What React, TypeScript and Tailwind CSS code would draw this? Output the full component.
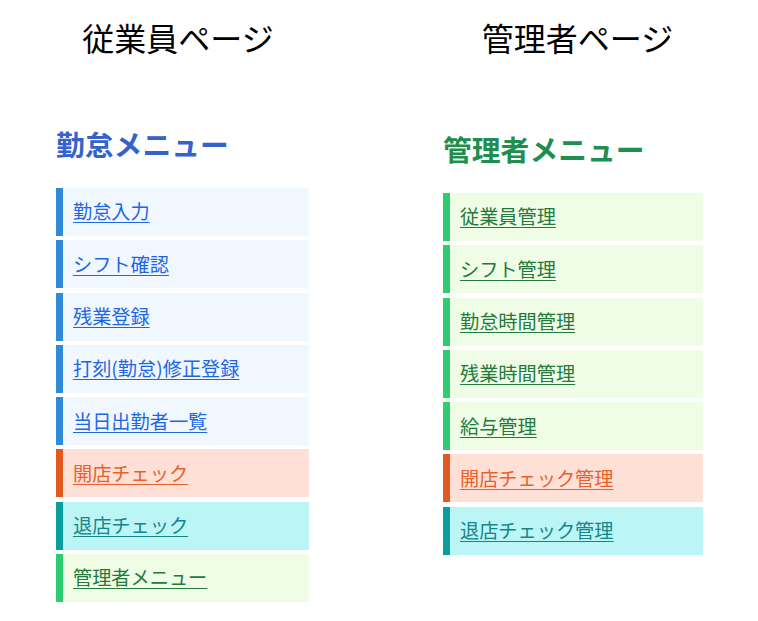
import React from 'react';

type Tone = 'blue' | 'orange' | 'teal' | 'green';

interface MenuItem {
  label: string;
  tone: Tone;
}

const toneStyles: Record<Tone, string> = {
  blue: 'bg-[#f0f7ff] border-[#2f8ad8] text-[#1f66e5]',
  orange: 'bg-[#ffe0d6] border-[#e35a1e] text-[#e8602a]',
  teal: 'bg-[#bcf5f5] border-[#0b9e9e] text-[#14868a]',
  green: 'bg-[#effde6] border-[#2ecc71] text-[#237a3b]',
};

const employeeMenu: MenuItem[] = [
  { label: '勤怠入力', tone: 'blue' },
  { label: 'シフト確認', tone: 'blue' },
  { label: '残業登録', tone: 'blue' },
  { label: '打刻(勤怠)修正登録', tone: 'blue' },
  { label: '当日出勤者一覧', tone: 'blue' },
  { label: '開店チェック', tone: 'orange' },
  { label: '退店チェック', tone: 'teal' },
  { label: '管理者メニュー', tone: 'green' },
];

const adminMenu: MenuItem[] = [
  { label: '従業員管理', tone: 'green' },
  { label: 'シフト管理', tone: 'green' },
  { label: '勤怠時間管理', tone: 'green' },
  { label: '残業時間管理', tone: 'green' },
  { label: '給与管理', tone: 'green' },
  { label: '開店チェック管理', tone: 'orange' },
  { label: '退店チェック管理', tone: 'teal' },
];

const MenuList: React.FC<{ items: MenuItem[] }> = ({ items }) => (
  <ul className="flex flex-col gap-[4.3px]">
    {items.map((item) => (
      <li
        key={item.label}
        className={`h-12 flex items-center border-l-[7px] pl-[10px] ${toneStyles[item.tone]}`}
      >
        <a href="#" className="text-[19.2px] leading-none underline underline-offset-[3px]">
          {item.label}
        </a>
      </li>
    ))}
  </ul>
);

export default function App() {
  return (
    <div
      className="w-[758px] h-[621px] bg-white flex"
      style={{ fontFamily: '"Noto Sans CJK JP", "Noto Sans", sans-serif' }}
    >
      {/* 従業員ページ */}
      <section className="w-[253px] ml-[56px] pt-[21px]">
        <h1 className="text-[32px] leading-[32px] text-black text-center pr-[9px]">従業員ページ</h1>
        <h2 className="mt-[76px] text-[28.8px] leading-[29px] font-bold text-[#3563cb]">勤怠メニュー</h2>
        <div className="mt-[30px]">
          <MenuList items={employeeMenu} />
        </div>
      </section>

      {/* 管理者ページ */}
      <section className="w-[260px] ml-[134px] pt-[21px]">
        <h1 className="text-[32px] leading-[32px] text-black text-center pl-[9px]">管理者ページ</h1>
        <h2 className="mt-[81px] text-[28.8px] leading-[29px] font-bold text-[#1f8f4f]">管理者メニュー</h2>
        <div className="mt-[30px]">
          <MenuList items={adminMenu} />
        </div>
      </section>
    </div>
  );
}
